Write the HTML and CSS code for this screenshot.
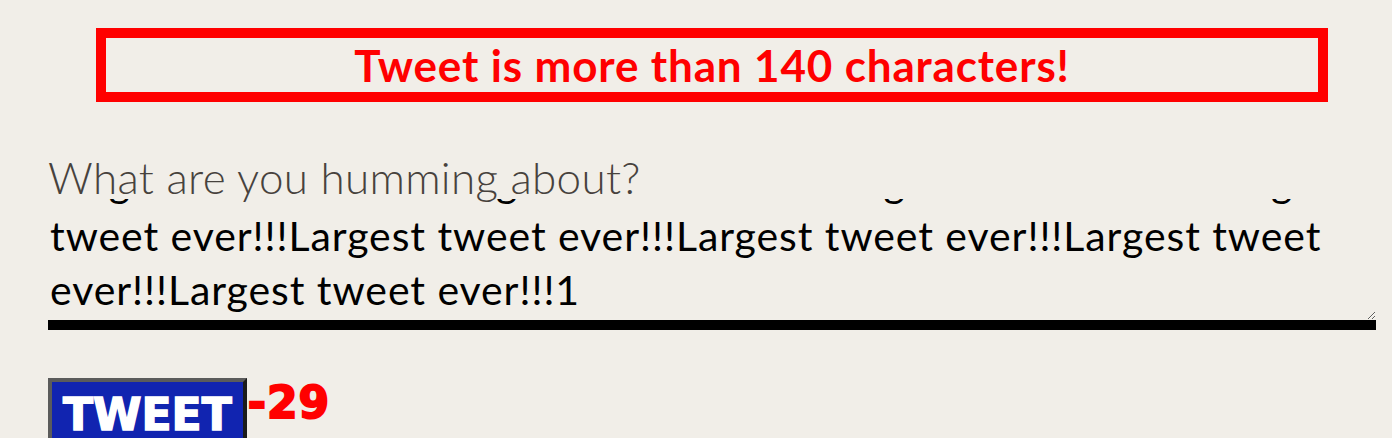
FILE: index.html
```html
<!DOCTYPE html>
<html lang="en">
<head>
<meta charset="utf-8">
<title>Hummer</title>
<link rel="stylesheet" href="styles.css">
</head>
<body>
<main class="composer">
  <div class="alert">Tweet is more than 140 characters!</div>
  <label class="prompt" for="tweet">What are you humming about?</label>
  <textarea id="tweet" class="tweet-input">Largest tweet ever!!!Largest tweet ever!!!Largest tweet ever!!!Largest tweet ever!!!Largest tweet ever!!!Largest tweet ever!!!Largest tweet ever!!!Largest tweet ever!!!1</textarea>
  <div class="actions">
    <button class="tweet-btn" type="button">TWEET</button>
    <span class="counter">-29</span>
  </div>
</main>
<script src="script.js"></script>
</body>
</html>
```
FILE: styles.css
```css
html, body {
  margin: 0;
  background: #f1eee8;
}
body {
  font-family: "Lato", "Noto Sans", sans-serif;
}
.composer {
  display: flex;
  flex-direction: column;
  padding: 28px 16px 0 48px;
}
.alert {
  margin: 0 48px;
  height: 54px;
  border: 10px solid #ff0000;
  display: flex;
  align-items: center;
  justify-content: center;
  color: #ff0000;
  font-weight: 700;
  font-size: 44px;
  letter-spacing: 0.85px;
  line-height: 1;
}
.prompt {
  margin-top: 53px;
  font-size: 44px;
  font-weight: 300;
  letter-spacing: 0.3px;
  line-height: 1;
  color: #47423d;
}
.tweet-input {
  display: block;
  box-sizing: border-box;
  width: 100%;
  height: 131px;
  margin: 0;
  padding: 0 4px 3px 2px;
  border: 0;
  border-bottom: 10px solid #000;
  background: transparent;
  color: #000;
  font-family: "Lato", "Noto Sans", sans-serif;
  font-size: 41px;
  letter-spacing: 0.93px;
  line-height: 54px;
  resize: vertical;
  outline: none;
  overflow: hidden;
}
.actions {
  display: flex;
  align-items: flex-start;
  margin-top: 48px;
}
.tweet-btn {
  background: #1124b0;
  color: #fff;
  border: 4px solid;
  border-color: #5b5b5b #1b1b1b #1b1b1b #5b5b5b;
  padding: 11px 11px 12px;
  font-family: "DejaVu Sans", sans-serif;
  font-weight: 700;
  font-size: 44px;
  -webkit-text-stroke: 1.5px #fff;
  line-height: 1;
}
.counter {
  margin-top: 3px;
  padding-left: 1px;
  color: #ff0000;
  font-family: "DejaVu Sans", sans-serif;
  font-weight: 700;
  font-size: 44px;
  -webkit-text-stroke: 2px #ff0000;
  letter-spacing: 1px;
  line-height: 1;
}
```
FILE: script.js
```js
var t = document.getElementById('tweet');
t.scrollTop = t.scrollHeight;
```
